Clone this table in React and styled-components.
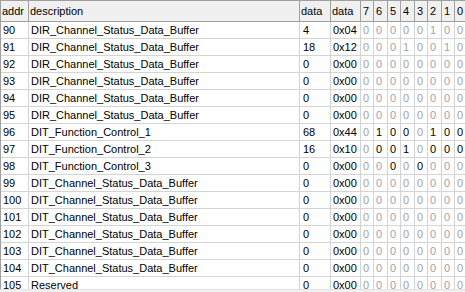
import React from "react";
import styled, { createGlobalStyle } from "styled-components";

const Global = createGlobalStyle`
  html, body { margin: 0; padding: 0; background: #ffffff; }
  body { font-family: "Liberation Sans", Arial, sans-serif; }
`;

const Frame = styled.div`
  width: 465px;
  height: 292px;
  overflow: hidden;
  display: flex;
  flex-direction: column;
  background: #ffffff;
`;

const Viewport = styled.div`
  flex: 1;
  overflow: hidden;
  border-top: 1px solid #a0a0a0;
  border-left: 1px solid #a0a0a0;
`;

const ScrollBand = styled.div`
  height: 2px;
  flex: none;
  background: #f0f0f0;
  border-top: 1px solid #e3e3e3;
`;

const COLS = "28px 271px 31px 30px 13px 14px 13px 14px 13px 14px 13px 14px";

const HeaderRow = styled.div`
  display: grid;
  grid-template-columns: ${COLS};
  height: 21px;
  box-sizing: border-box;
  background: #f0f0f0;
  border-bottom: 1px solid #a0a0a0;
  width: max-content;
`;

const HeadCell = styled.div`
  box-sizing: border-box;
  border-right: 1px solid #a0a0a0;
  padding-left: ${(p) => (p.$bit ? 2 : 1)}px;
  font-size: 11px;
  line-height: 20px;
  color: #000;
  white-space: nowrap;
  overflow: hidden;
`;

const Row = styled.div`
  display: grid;
  grid-template-columns: ${COLS};
  height: 17px;
  box-sizing: border-box;
  border-bottom: 1px solid #d4d4d4;
  width: max-content;
`;

const Cell = styled.div`
  box-sizing: border-box;
  border-right: 1px solid #d4d4d4;
  padding-left: ${(p) => p.$pad}px;
  font-size: 11px;
  line-height: 17px;
  color: ${(p) => (p.$dim ? "#a2a2aa" : "#000")};
  white-space: nowrap;
  overflow: hidden;
`;

const rows = [
  [90, "DIR_Channel_Status_Data_Buffer", 4, []],
  [91, "DIR_Channel_Status_Data_Buffer", 18, []],
  [92, "DIR_Channel_Status_Data_Buffer", 0, []],
  [93, "DIR_Channel_Status_Data_Buffer", 0, []],
  [94, "DIR_Channel_Status_Data_Buffer", 0, []],
  [95, "DIR_Channel_Status_Data_Buffer", 0, []],
  [96, "DIT_Function_Control_1", 68, [6, 5, 4, 2, 1, 0]],
  [97, "DIT_Function_Control_2", 16, [6, 5, 4, 2, 1, 0]],
  [98, "DIT_Function_Control_3", 0, [5, 3]],
  [99, "DIT_Channel_Status_Data_Buffer", 0, []],
  [100, "DIT_Channel_Status_Data_Buffer", 0, []],
  [101, "DIT_Channel_Status_Data_Buffer", 0, []],
  [102, "DIT_Channel_Status_Data_Buffer", 0, []],
  [103, "DIT_Channel_Status_Data_Buffer", 0, []],
  [104, "DIT_Channel_Status_Data_Buffer", 0, []],
  [105, "Reserved", 0, []],
];

const BITS = [7, 6, 5, 4, 3, 2, 1, 0];

export default function App() {
  return (
    <>
      <Global />
      <Frame>
        <Viewport>
          <HeaderRow>
            <HeadCell>addr</HeadCell>
            <HeadCell>description</HeadCell>
            <HeadCell>data</HeadCell>
            <HeadCell>data</HeadCell>
            {BITS.map((b) => (
              <HeadCell key={b} $bit>
                {b}
              </HeadCell>
            ))}
          </HeaderRow>
          {rows.map(([addr, desc, val, active]) => (
            <Row key={addr}>
              <Cell $pad={2}>{addr}</Cell>
              <Cell $pad={2}>{desc}</Cell>
              <Cell $pad={3}>{val}</Cell>
              <Cell $pad={2}>{"0x" + val.toString(16).padStart(2, "0")}</Cell>
              {BITS.map((b) => (
                <Cell key={b} $pad={2} $dim={!active.includes(b)}>
                  {(val >> b) & 1}
                </Cell>
              ))}
            </Row>
          ))}
        </Viewport>
        <ScrollBand />
      </Frame>
    </>
  );
}
